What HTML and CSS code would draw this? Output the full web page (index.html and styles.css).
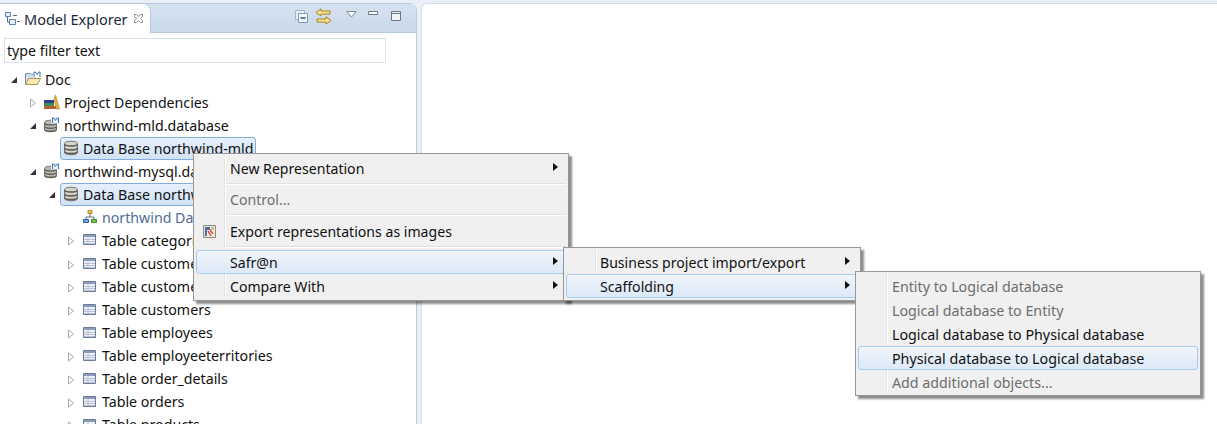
FILE: index.html
```html
<!DOCTYPE html>
<html lang="en">

<head>
    <meta charset="UTF-8">
    <title>Model Explorer</title>
    <link rel="stylesheet" href="styles.css">
</head>

<body>
    <svg class="defs" width="0" height="0">
        <symbol id="i-db" viewBox="0 0 16 16">
            <path d="M1.5 3.5c0-3 13-3 13 0v9c0 3-13 3-13 0z" fill="#b9b9b2" stroke="#77776f"/>
            <path d="M2 3.500c0-2 12-2 12 0s-12 2-12 0z" fill="#d9d5cc"/>
            <path d="M1.500 4c0 2.600 13 2.600 13 0M1.500 8c0 2.600 13 2.600 13 0M1.500 11.500c0 2.600 13 2.600 13 0" fill="none" stroke="#5c5c55" stroke-width="1.400"/>
            <path d="M3 7c2 1 8 1 10 0M3 11c2 1 8 1 10 0" fill="none" stroke="#e4e4de"/>
        </symbol>
        <symbol id="i-dbm" viewBox="0 0 16 16">
            <path d="M.5 5.500c0-3 12-3 12 0v7c0 3-12 3-12 0z" fill="#b9b9b2" stroke="#77776f"/>
            <path d="M.5 6c0 2.600 12 2.600 12 0M.5 9.300c0 2.600 12 2.600 12 0M.5 12.300c0 2.600 12 2.600 12 0" fill="none" stroke="#5c5c55" stroke-width="1.300"/>
            <path d="M7 0h8v6.500H7z" fill="#e8f0f8"/>
            <path d="M8.500 6V1h1.300l1.700 2.400L13.200 1h1.300v5" fill="none" stroke="#3a72ad"/>
        </symbol>
        <symbol id="i-folder" viewBox="0 0 16 16">
            <path d="M.5 12.500v-10h5l1 1h4v9z" fill="#cfe0f0" stroke="#7f92a6"/>
            <path d="M.5 13.500l3-6h12l-3 6z" fill="#fbe7ab" stroke="#a8965f"/>
            <path d="M8 0h8v6.500H8z" fill="#fff"/>
            <path d="M9 6V1h1.300l1.700 2.400L13.700 1H15v5" fill="none" stroke="#3a72ad"/>
        </symbol>
        <symbol id="i-books" viewBox="0 0 16 16">
            <path d="M0 6h10v3H0z" fill="#2f3f8f"/>
            <path d="M0 9h10v3H0z" fill="#3f8f58"/>
            <path d="M0 12h12v3H0z" fill="#b5652c"/>
            <path d="M11.500 1l4 14h-3L10 5z" fill="#e8b13c" stroke="#a87c20" stroke-width=".6"/>
        </symbol>
        <symbol id="i-diagram" viewBox="0 0 16 16">
            <path d="M8 5v3M4 10V8h8v2" fill="none" stroke="#5f6f82"/>
            <path d="M6 1.500h4v3H6z" fill="#f3c94f" stroke="#a8862a"/>
            <path d="M1.500 10.500h5v3h-5z" fill="#7ea6da" stroke="#2f5a9c"/>
            <path d="M9.500 10.500h5v3h-5z" fill="#7cc04e" stroke="#3f8a25"/>
        </symbol>
        <symbol id="i-table" viewBox="0 0 16 16">
            <path d="M1.500 2.500h12v10h-12z" fill="#eef1f7" stroke="#6b7a99"/>
            <path d="M2 3h11v2H2z" fill="#8d9cba"/>
            <path d="M2 7.500h11M2 9.500h11M2 11.500h11M6 5v7" fill="none" stroke="#b9c2d3"/>
        </symbol>
        <symbol id="i-open" viewBox="0 0 8 8" preserveAspectRatio="xMinYMid">
            <path d="M7 1v6H1z" fill="#333"/>
        </symbol>
        <symbol id="i-closed" viewBox="0 0 8 10" preserveAspectRatio="xMinYMid">
            <path d="M1.500 1l5 4-5 4z" fill="#fff" stroke="#a9a9a9"/>
        </symbol>
    </svg>

    <div class="workbench">
        <section class="view">
            <header class="view-head">
                <div class="tab">
                    <svg class="tab-icon" viewBox="0 0 16 16" width="16" height="16">
                        <path d="M.5 1.500h5v4h-5z" fill="#e6eef6" stroke="#5d84a8"/>
                        <path d="M4.500 8.500h6v5h-6z" fill="#e6eef6" stroke="#5d84a8"/>
                        <path d="M2.500 5.500v5.500h2M8 4.500h4M12 10.500h3" fill="none" stroke="#4a7094"/>
                    </svg>
                    <span class="tab-title">Model Explorer</span>
                    <svg class="tab-close" viewBox="0 0 11 11" width="11" height="11">
                        <path d="M1.500 1.500h2l2 2 2-2h2v2l-2 2 2 2v2h-2l-2-2-2 2h-2v-2l2-2-2-2z" fill="#fff" stroke="#8a8a8a"/>
                    </svg>
                </div>
                <div class="tools">
                    <svg viewBox="0 0 13 13" width="13" height="13" class="tool">
                        <path d="M.5.500h9v9h-9z" fill="#e8eef5" stroke="#9fb3c8"/>
                        <path d="M3.500 3.500h9v9h-9z" fill="#f6f9fc" stroke="#7f9ab5"/>
                        <path d="M5.500 8h5" stroke="#1f4f7d" stroke-width="1.400"/>
                    </svg>
                    <svg viewBox="0 0 17 17" width="17" height="17" class="tool tool-link">
                        <path d="M6 .8L1 4.500 6 8V6h9V3H6z" fill="#fbe59a" stroke="#a9801c"/>
                        <path d="M11 8.800l5 3.700-5 3.500V14H2v-3h9z" fill="#fbe59a" stroke="#a9801c"/>
                    </svg>
                    <svg viewBox="0 0 11 7" width="11" height="7" class="tool tool-menu">
                        <path d="M.8.500h9.400L5.500 6z" fill="#fff" stroke="#7c8894"/>
                    </svg>
                    <svg viewBox="0 0 10 5" width="10" height="5" class="tool tool-min">
                        <path d="M.5.500h9v3h-9z" fill="#fff" stroke="#6c7884"/>
                    </svg>
                    <svg viewBox="0 0 11 11" width="11" height="11" class="tool tool-max">
                        <path d="M.5.500h9v9h-9z" fill="#eef3f8" stroke="#6c7884"/>
                        <path d="M1 2.500h8" stroke="#6c7884"/>
                    </svg>
                </div>
            </header>

            <div class="filter">type filter text</div>

            <div class="tree">
                <div class="row lvl0"><svg class="arrow"><use href="#i-open"/></svg><span class="item"><svg class="icon"><use href="#i-folder"/></svg>Doc</span></div>
                <div class="row lvl1"><svg class="arrow closed"><use href="#i-closed"/></svg><span class="item"><svg class="icon"><use href="#i-books"/></svg>Project Dependencies</span></div>
                <div class="row lvl1"><svg class="arrow"><use href="#i-open"/></svg><span class="item"><svg class="icon"><use href="#i-dbm"/></svg>northwind-mld.database</span></div>
                <div class="row lvl2"><span class="arrow"></span><span class="item selected"><svg class="icon"><use href="#i-db"/></svg>Data Base northwind-mld</span></div>
                <div class="row lvl1"><svg class="arrow"><use href="#i-open"/></svg><span class="item"><svg class="icon"><use href="#i-dbm"/></svg>northwind-mysql.database</span></div>
                <div class="row lvl2"><svg class="arrow"><use href="#i-open"/></svg><span class="item selected"><svg class="icon"><use href="#i-db"/></svg>Data Base northwind-mysql</span></div>
                <div class="row lvl3"><span class="arrow"></span><span class="item link"><svg class="icon"><use href="#i-diagram"/></svg>northwind Database</span></div>
                <div class="row lvl3"><svg class="arrow closed"><use href="#i-closed"/></svg><span class="item"><svg class="icon"><use href="#i-table"/></svg>Table categories</span></div>
                <div class="row lvl3"><svg class="arrow closed"><use href="#i-closed"/></svg><span class="item"><svg class="icon"><use href="#i-table"/></svg>Table customerdemo</span></div>
                <div class="row lvl3"><svg class="arrow closed"><use href="#i-closed"/></svg><span class="item"><svg class="icon"><use href="#i-table"/></svg>Table customerdemographics</span></div>
                <div class="row lvl3"><svg class="arrow closed"><use href="#i-closed"/></svg><span class="item"><svg class="icon"><use href="#i-table"/></svg>Table customers</span></div>
                <div class="row lvl3"><svg class="arrow closed"><use href="#i-closed"/></svg><span class="item"><svg class="icon"><use href="#i-table"/></svg>Table employees</span></div>
                <div class="row lvl3"><svg class="arrow closed"><use href="#i-closed"/></svg><span class="item"><svg class="icon"><use href="#i-table"/></svg>Table employeeterritories</span></div>
                <div class="row lvl3"><svg class="arrow closed"><use href="#i-closed"/></svg><span class="item"><svg class="icon"><use href="#i-table"/></svg>Table order_details</span></div>
                <div class="row lvl3"><svg class="arrow closed"><use href="#i-closed"/></svg><span class="item"><svg class="icon"><use href="#i-table"/></svg>Table orders</span></div>
                <div class="row lvl3"><svg class="arrow closed"><use href="#i-closed"/></svg><span class="item"><svg class="icon"><use href="#i-table"/></svg>Table products</span></div>
            </div>
        </section>

        <main class="editor"></main>
    </div>

    <div class="menu menu-main">
        <div class="menu-item">New Representation<i class="sub"></i></div>
        <div class="menu-sep"></div>
        <div class="menu-item off">Control...</div>
        <div class="menu-sep wide"></div>
        <div class="menu-item">
            <svg class="menu-icon" viewBox="0 0 13 13" width="13" height="13">
                <path d="M.5.500h12v12H.5z" fill="#e6e6e0" stroke="#8d8d80"/>
                <path d="M2 2h9v9H2z" fill="#f1f1ee"/>
                <path d="M2 2h5v3H2zM2 5h2v6H2z" fill="#4f6d9c"/>
                <path d="M8 2h3v3H8z" fill="#d8b98a"/>
                <path d="M5 6l3 5M7 5l3 4" stroke="#c8402f" stroke-width="1.400"/>
            </svg>
            Export representations as images
        </div>
        <div class="menu-sep"></div>
        <div class="menu-item active">Safr@n<i class="sub"></i></div>
        <div class="menu-item">Compare With<i class="sub"></i></div>
    </div>

    <div class="menu menu-second">
        <div class="menu-item">Business project import/export<i class="sub"></i></div>
        <div class="menu-item active">Scaffolding<i class="sub"></i></div>
    </div>

    <div class="menu menu-third">
        <div class="menu-item off">Entity to Logical database</div>
        <div class="menu-item off">Logical database to Entity</div>
        <div class="menu-item">Logical database to Physical database</div>
        <div class="menu-item active">Physical database to Logical database</div>
        <div class="menu-item off">Add additional objects...</div>
    </div>
</body>

</html>
```

FILE: styles.css
```css
html,
body {
    height: 100%;
    margin: 0;
    overflow: hidden;
}

body {
    font-family: "Noto Sans", Arial, sans-serif;
    font-size: 14.2px;
    color: #111;
    background: #e9eef7;
}

.defs {
    position: absolute;
}

.workbench {
    display: flex;
    gap: 4px;
    height: 100%;
    padding-top: 3px;
    box-sizing: border-box;
}

.view {
    width: 417px;
    flex: none;
    box-sizing: border-box;
    background: #fff;
    border-right: 1px solid #b9c8da;
    border-top-right-radius: 8px;
    overflow: hidden;
}

.view-head {
    display: flex;
    justify-content: space-between;
    height: 30px;
    background: linear-gradient(#d5e2f0, #c9d9ea);
    border-top: 1px solid #b9c8da;
    border-bottom: 1px solid #b9c8da;
    box-sizing: border-box;
}

.tab {
    display: flex;
    align-items: center;
    width: 151px;
    height: 29px;
    box-sizing: border-box;
    padding-left: 5px;
    background: #fff;
    border-right: 1px solid #b9c8da;
    border-top-right-radius: 8px;
}

.tab-title {
    margin-left: 3px;
    font-size: 14.5px;
    color: #1b2a3a;
}

.tab-close {
    margin-left: 5px;
}

.tools {
    display: flex;
    align-items: flex-start;
    padding-top: 6px;
    margin-right: 14px;
}

.tool-link {
    margin-left: 7px;
    margin-top: -2px;
}

.tool-menu {
    margin-left: 14px;
    margin-top: 1px;
}

.tool-min {
    margin-left: 11px;
    margin-top: 1px;
}

.tool-max {
    margin-left: 13px;
    margin-top: 1px;
}

.filter {
    width: 382px;
    height: 25px;
    box-sizing: border-box;
    margin: 5px 0 4.5px 4px;
    padding-left: 2px;
    line-height: 23px;
    border: 1px solid #dbe1ea;
}

.tree {
    line-height: 21px;
}

.row {
    display: flex;
    align-items: center;
    height: 23.07px;
}

.lvl0 {
    padding-left: 10px;
}

.lvl1 {
    padding-left: 29px;
}

.lvl2 {
    padding-left: 48px;
}

.lvl3 {
    padding-left: 67px;
}

.arrow {
    width: 12px;
    height: 8px;
    flex: none;
    margin-top: 2px;
}

.arrow.closed {
    height: 10px;
}

.item {
    display: flex;
    align-items: center;
    gap: 4px;
    height: 21px;
    padding: 0 2px;
    border: 1px solid transparent;
    border-radius: 3px;
    white-space: nowrap;
}

.item.selected {
    background: linear-gradient(#e6f0fb, #d0e2f6);
    border-color: #84acdd;
}

.item.link {
    color: #4c6e96;
}

.icon {
    width: 16px;
    height: 16px;
    flex: none;
}

.editor {
    flex: 1;
    background: #fff;
    border-left: 1px solid #d4deeb;
    border-top: 1px solid #d4deeb;
    border-top-left-radius: 6px;
}

.menu {
    position: absolute;
    box-sizing: border-box;
    padding: 2px;
    font-size: 14.1px;
    background: #f0f0f0;
    border: 1px solid #979797;
    box-shadow: 3px 3px 2px rgba(0, 0, 0, 0.45);
}

.menu::before {
    content: "";
    position: absolute;
    top: 2px;
    bottom: 2px;
    width: 1px;
    background: #e2e3e3;
    border-right: 1px solid #fff;
}

.menu-main {
    left: 193px;
    top: 153px;
    width: 376px;
    height: 148px;
}

.menu-main::before {
    left: 30px;
}

.menu-second {
    left: 563px;
    top: 247px;
    width: 298px;
    height: 54px;
}

.menu-second::before {
    left: 31px;
}

.menu-third {
    left: 855px;
    top: 271px;
    width: 346px;
    height: 125px;
    font-size: 14.25px;
}

.menu-third::before {
    left: 30px;
}

.menu-item {
    position: relative;
    display: flex;
    align-items: center;
    height: 24px;
    box-sizing: border-box;
    padding-left: 33px;
    border: 1px solid transparent;
    border-radius: 3px;
    white-space: nowrap;
}

.menu-item.off {
    color: #6d6d6d;
}

.menu-item.active {
    background: linear-gradient(#f0f5fb, #dce9f7);
    border-color: #a8cbef;
}

.menu-sep {
    height: 1px;
    margin: 3px 0 2px 30px;
    background: #e0e0e0;
    border-bottom: 1px solid #fff;
}

.menu-sep.wide {
    margin-bottom: 3px;
}

.menu-icon {
    position: absolute;
    left: 6px;
    top: 5px;
}

.sub {
    position: absolute;
    right: 7px;
    top: 6px;
    border-left: 5px solid #111;
    border-top: 4px solid transparent;
    border-bottom: 4px solid transparent;
}
```
